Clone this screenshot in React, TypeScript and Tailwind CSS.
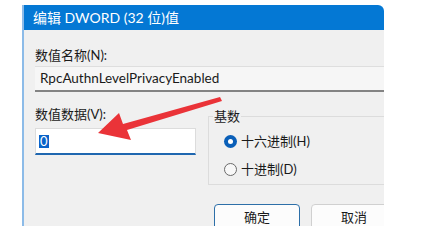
import React from "react";

const font = { fontFamily: 'Lato, "Noto Sans CJK SC", sans-serif' };

function Arrow() {
  return (
    <svg className="absolute left-0 top-0 pointer-events-none" width="425" height="247" viewBox="0 0 425 247">
      <polygon points="220,97 222,101 127,130 131,140 98,133 119,113 123,124" fill="#ea3338" />
    </svg>
  );
}

export default function App() {
  return (
    <div className="relative w-[425px] h-[247px] overflow-hidden bg-white text-[13px] text-[#1a1a1a]" style={font}>
      <div className="ml-[22px] mt-[5px] w-[362px] h-[221px] flex flex-col border-l-2 border-[#8cbbe8] rounded-tr-[6px] overflow-hidden">
        <div className="h-[25px] shrink-0 bg-[#0478d4] flex items-center pl-[9px] text-white text-[14px] leading-none">
          编辑 DWORD (32 位)值
        </div>
        <div className="flex-1 bg-[#f0f0f0] pl-[11px] pt-[17px] flex flex-col">
          <div className="leading-[16px]">数值名称(N):</div>
          <div className="mt-[3px] h-[26px] shrink-0 bg-[#f6f6f6] border-t border-[#dedede] border-b-2 border-b-[#838383] flex items-center pl-[5px] -mr-1 text-[13.5px]">
            RpcAuthnLevelPrivacyEnabled
          </div>
          <div className="flex mt-[14px]">
            <div className="w-[161px] shrink-0 flex flex-col">
              <div className="leading-[16px]">数值数据(V):</div>
              <div className="mt-[6px] h-[27px] bg-white border border-[#dcdcdc] border-b-2 border-b-[#1f67b0] flex items-center pl-[3px]">
                <span className="bg-[#0a63c9] text-white leading-[13px] px-[1px]">0</span>
              </div>
            </div>
            <div className="flex-1 min-w-0 ml-[12px] flex flex-col">
              <div className="relative h-[69px] mt-[10px] border border-r-0 border-[#dcdcdc] -mr-2">
                <div className="absolute -top-[9px] left-[4px] px-[1px] bg-[#f0f0f0] leading-[16px]">基数</div>
                <div className="pl-[15px] pt-[16px] flex flex-col gap-[12px]">
                  <div className="flex items-center gap-[4px] leading-[16px]">
                    <span className="w-[13px] h-[13px] rounded-full bg-[#0a5fb8] flex items-center justify-center">
                      <span className="w-[5px] h-[5px] rounded-full bg-white" />
                    </span>
                    十六进制(H)
                  </div>
                  <div className="flex items-center gap-[4px] leading-[16px]">
                    <span className="w-[13px] h-[13px] rounded-full border border-[#6a6a6a] bg-[#f8f8f8]" />
                    十进制(D)
                  </div>
                </div>
              </div>
              <div className="flex gap-[11px] mt-[19px] pl-[6px]">
                <div className="w-[86px] h-[28px] shrink-0 rounded-[4px] border border-[#2d6fa8] bg-[#fcfcfc] flex justify-center pt-[4px] leading-[16px]">
                  确定
                </div>
                <div className="w-[86px] h-[28px] shrink-0 rounded-[4px] border border-[#d0d0d0] bg-[#fcfcfc] flex justify-center pt-[4px] leading-[16px]">
                  取消
                </div>
              </div>
            </div>
          </div>
        </div>
      </div>
      <Arrow />
    </div>
  );
}
